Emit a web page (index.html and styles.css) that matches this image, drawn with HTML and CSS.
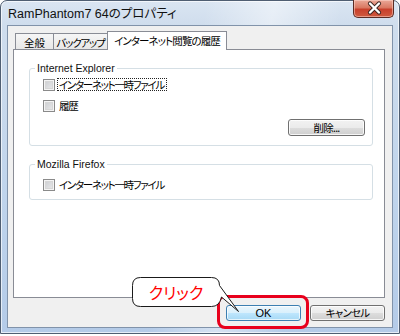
FILE: index.html
```html
<!DOCTYPE html>
<html lang="ja">
<head>
<meta charset="utf-8">
<title>RamPhantom7 64のプロパティ</title>
<link rel="stylesheet" href="styles.css">
</head>
<body>
<div class="window">
  <div class="titlebar">
    <span class="title">RamPhantom7 64のプロパティ</span>
    <div class="close">
      <svg width="41" height="18" viewBox="0 0 41 18">
        <path d="M16 4.5 L25 13.5 M25 4.5 L16 13.5" stroke="#3a2420" stroke-width="4.2" stroke-linecap="round"/>
        <path d="M16 4.5 L25 13.5 M25 4.5 L16 13.5" stroke="#ffffff" stroke-width="2.4" stroke-linecap="round"/>
      </svg>
    </div>
  </div>
  <div class="client">
    <div class="tabs">
      <div class="tab t1">全般</div>
      <div class="tab t2">バックアップ</div>
      <div class="tab active">インターネット閲覧の履歴</div>
    </div>
    <div class="panel">
      <fieldset class="group ie">
        <legend>Internet Explorer</legend>
        <label class="check first"><span class="box"></span><span class="label focus">インターネット一時ファイル</span></label>
        <label class="check second"><span class="box"></span><span class="label">履歴</span></label>
        <div class="btnrow"><button class="btn del">削除...</button></div>
      </fieldset>
      <fieldset class="group ff">
        <legend>Mozilla Firefox</legend>
        <label class="check first"><span class="box"></span><span class="label">インターネット一時ファイル</span></label>
      </fieldset>
    </div>
    <div class="buttons">
      <button class="btn ok">OK</button>
      <button class="btn cancel">キャンセル</button>
    </div>
  </div>
  <div class="highlight"></div>
  <div class="callout">
    <svg class="bubble" width="116" height="42" viewBox="128 274 116 42">
      <path d="M140.5,277.5 H211.5 Q219.5,277.5 219.5,285.5 L238.5,311.5 L221.5,297 Q219.5,306.5 211.5,306.5 H140.5 Q132.5,306.5 132.5,298.5 V285.5 Q132.5,277.5 140.5,277.5 Z" fill="#ffffff" stroke="#1a1a1a" stroke-width="1"/>
    </svg>
    <span class="callout-text">クリック</span>
  </div>
</div>
</body>
</html>
```
FILE: styles.css
```css
html, body {
  margin: 0;
  padding: 0;
  background: #ffffff;
}
body {
  width: 400px;
  height: 336px;
  overflow: hidden;
  font-family: "Liberation Sans", "Noto Sans CJK JP", sans-serif;
  font-size: 11px;
  color: #000;
}
.window {
  position: relative;
  box-sizing: border-box;
  width: 400px;
  height: 334px;
  border: 1px solid #4f5e72;
  border-radius: 7px 7px 0 0;
  padding: 0 6px 5px 6px;
  display: flex;
  flex-direction: column;
  background:
    linear-gradient(100deg, rgba(255,255,255,0) 45%, rgba(255,255,255,0.45) 60%, rgba(255,255,255,0) 75%),
    linear-gradient(to bottom, #dae5f2 0px, #cfdded 25px, #bfd4ec 60%, #b4cbe8 100%);
  box-shadow: inset 0 0 0 1px rgba(255,255,255,0.65);
}
.titlebar {
  height: 24px;
  display: flex;
  justify-content: space-between;
  align-items: flex-start;
  padding-left: 1px;
}
.title {
  margin-top: 5px;
  font-size: 12.5px;
  line-height: 16px;
  color: #111;
  font-feature-settings: "palt";
}
.close {
  width: 41px;
  height: 18px;
  margin-top: -1px;
  margin-right: -1px;
  box-sizing: border-box;
  border: 1px solid #5a2b24;
  border-top: none;
  border-radius: 0 0 5px 5px;
  background: linear-gradient(to bottom, #eaa898 0%, #d97862 45%, #c8402c 55%, #cf5a3f 100%);
  box-shadow: inset 0 0 0 1px rgba(255,220,210,0.5);
}
.close svg { display: block; margin-top: -1px; }
.client {
  flex: 1;
  border: 1px solid #8193aa;
  background: #f0f0f0;
  display: flex;
  flex-direction: column;
  font-family: "Noto Sans CJK JP", sans-serif;
  font-feature-settings: "palt";
}
.tabs {
  display: flex;
  align-items: flex-end;
  height: 19px;
  margin: 5px 0 0 7px;
}
.tab {
  box-sizing: border-box;
  height: 17px;
  border: 1px solid #898c95;
  border-bottom: none;
  background: linear-gradient(to bottom, #f6f6f6, #e6e6e6);
  display: flex;
  justify-content: center;
  align-items: center;
  font-size: 10.5px;
  line-height: 14px;
  letter-spacing: -1.2px;
  white-space: nowrap;
  padding-top: 1px;
}
.t1 { width: 39px; letter-spacing: 0; }
.t2 { width: 55px; margin-left: -1px; }
.tab.active {
  width: 120px;
  height: 19px;
  margin-left: -1px;
  background: #ffffff;
  position: relative;
  z-index: 1;
  padding-top: 0;
  letter-spacing: -0.9px;
}
.panel {
  box-sizing: border-box;
  width: 372px;
  height: 249px;
  margin: -1px 0 0 5px;
  border: 1px solid #898c95;
  background: #ffffff;
  display: flex;
  flex-direction: column;
}
.group {
  box-sizing: border-box;
  width: 344px;
  min-inline-size: 0;
  margin: 11px 0 0 15px;
  padding: 0 7px 9px 5px;
  border: 1px solid #d5dfe5;
  border-radius: 3px;
  display: flex;
  flex-direction: column;
}
.group legend {
  padding: 0 2px;
  font-family: "Liberation Sans", sans-serif;
  font-size: 10.5px;
  line-height: 14px;
  color: #111;
}
.ff { padding-bottom: 8px; }
.check {
  display: flex;
  align-items: center;
  height: 13px;
  margin-left: 8px;
  font-size: 10.5px;
  letter-spacing: -1.3px;
}
.ie .first { margin-top: 3px; }
.ie .second { margin-top: 8px; }
.ff .first { margin-top: 7px; }
.box {
  box-sizing: border-box;
  width: 12px;
  height: 12px;
  border: 1px solid #8a8a8a;
  background: linear-gradient(135deg, #c9cbcf, #ececec);
  box-shadow: inset 0 0 0 1px #f4f4f4, inset 0 0 0 2px #d6d6d6;
  margin-right: 2px;
  flex: none;
}
.label {
  box-sizing: border-box;
  height: 13px;
  line-height: 11px;
  padding: 0 2px 0 1px;
  border: 1px solid transparent;
  white-space: nowrap;
}
.label.focus { border: 1px dotted #222; }
.btnrow {
  display: flex;
  justify-content: flex-end;
  margin-top: 7px;
}
.btn {
  box-sizing: border-box;
  height: 16px;
  padding: 0;
  border: 1px solid #707070;
  border-radius: 3px;
  background: linear-gradient(to bottom, #f2f2f2 0%, #ebebeb 50%, #dddddd 51%, #cfcfcf 100%);
  box-shadow: inset 0 0 0 1px rgba(255,255,255,0.8);
  font-family: "Noto Sans CJK JP", sans-serif;
  font-feature-settings: "palt";
  font-size: 10.5px;
  line-height: 12px;
  letter-spacing: -0.8px;
  color: #000;
}
.btn.del { width: 77px; height: 17px; }
.buttons {
  display: flex;
  justify-content: flex-end;
  gap: 9px;
  margin: 7px 7px 0 0;
}
.btn.ok, .btn.cancel { width: 75px; }
.btn.ok {
  border-color: #3c7fb1;
  background: linear-gradient(to bottom, #eaf6fd 0%, #d9f0fc 50%, #bee6fd 51%, #a7d9f5 100%);
  box-shadow: inset 0 0 0 1px rgba(255,255,255,0.7);
  font-family: "Liberation Sans", sans-serif;
  font-size: 11px;
  letter-spacing: 0;
}
.highlight {
  position: absolute;
  left: 216px;
  top: 294px;
  width: 92px;
  height: 34px;
  box-sizing: border-box;
  border: 3px solid #e8001c;
  border-radius: 8px;
}
.callout {
  position: absolute;
  left: 127px;
  top: 273px;
  width: 116px;
  height: 42px;
}
.bubble { display: block; }
.callout-text {
  position: absolute;
  left: 4px;
  top: 3px;
  width: 88px;
  height: 30px;
  display: flex;
  align-items: center;
  justify-content: center;
  font-family: "Noto Sans CJK JP", sans-serif;
  font-feature-settings: "palt";
  font-size: 16px;
  color: #ff0000;
}
```
